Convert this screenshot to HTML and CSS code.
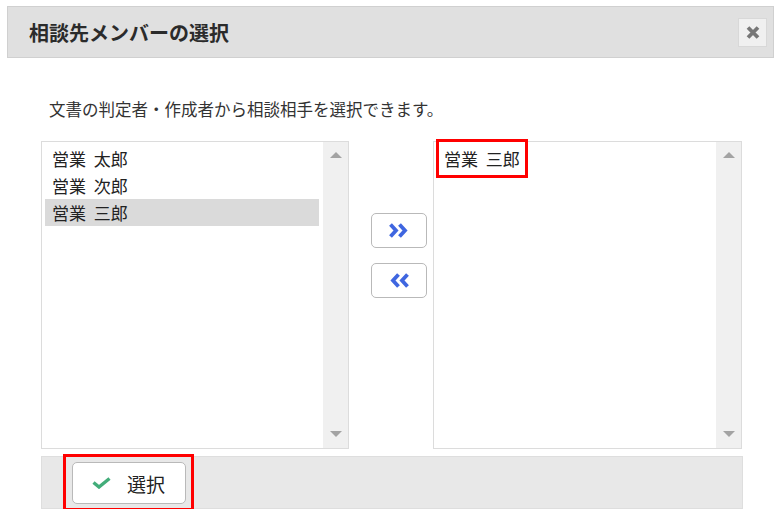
FILE: index.html
```html
<!DOCTYPE html>
<html lang="ja">
<head>
    <meta charset="UTF-8">
    <title>相談先メンバーの選択</title>
    <link rel="stylesheet" href="styles.css">
</head>
<body>

    <div class="dialog">
        <div class="dialog-header">
            <h2>相談先メンバーの選択</h2>
            <button class="close-btn" title="閉じる">
                <svg width="14" height="13" viewBox="0 0 14 13"><path d="M2 1.5 L12 11.5 M12 1.5 L2 11.5" stroke="#777" stroke-width="3.8"/></svg>
            </button>
        </div>

        <div class="dialog-body">
            <p class="note">文書の判定者・作成者から相談相手を選択できます。</p>

            <div class="picker">
                <div class="listbox">
                    <ul class="items">
                        <li>営業 太郎</li>
                        <li>営業 次郎</li>
                        <li class="selected">営業 三郎</li>
                    </ul>
                    <div class="scrollbar"><span class="arrow-up"></span><span class="arrow-down"></span></div>
                </div>

                <div class="move-buttons">
                    <button class="move-btn">
                        <svg width="22" height="15" viewBox="0 0 22 15"><path d="M2.5 1.5 L8 7.5 L2.5 13.5 M11.5 1.5 L17 7.5 L11.5 13.5" fill="none" stroke="#3f66e0" stroke-width="3.8"/></svg>
                    </button>
                    <button class="move-btn">
                        <svg width="22" height="15" viewBox="0 0 22 15"><path d="M19.5 1.5 L14 7.5 L19.5 13.5 M10.5 1.5 L5 7.5 L10.5 13.5" fill="none" stroke="#3f66e0" stroke-width="3.8"/></svg>
                    </button>
                </div>

                <div class="listbox">
                    <ul class="items items-right">
                        <li class="marked">営業 三郎</li>
                    </ul>
                    <div class="scrollbar"><span class="arrow-up"></span><span class="arrow-down"></span></div>
                </div>
            </div>

            <div class="dialog-footer">
                <div class="mark-box">
                    <button class="select-btn">
                        <svg width="19" height="12" viewBox="0 0 19 12"><path d="M1.5 5.5 L7 10 L17.5 1.5" fill="none" stroke="#43ad7a" stroke-width="3.4"/></svg>
                        <span>選択</span>
                    </button>
                </div>
            </div>
        </div>
    </div>

</body>
</html>
```

FILE: styles.css
```css
body {
    margin: 0;
    background-color: #fff;
    font-family: "Noto Sans CJK JP", "Noto Sans", sans-serif;
    color: #333;
}
.dialog {
    margin: 6px 6px 0 7px;
}
.dialog-header {
    height: 50px;
    background-color: #e0e0e0;
    border: 1px solid #d0d0d0;
    display: flex;
    align-items: center;
    justify-content: space-between;
    padding: 0 6px 0 21px;
}
.dialog-header h2 {
    margin: 0;
    font-size: 20px;
    font-weight: bold;
    color: #2b2b2b;
}
.close-btn {
    width: 29px;
    height: 29px;
    padding: 0;
    background-color: #f0f0f0;
    border: 1px solid #d8d8d8;
    display: flex;
    align-items: center;
    justify-content: center;
    cursor: pointer;
}
.dialog-body {
    padding: 0 31px 0 34px;
}
.note {
    margin: 40px 0 21px;
    padding-left: 8px;
    font-size: 16.5px;
    line-height: 22px;
    color: #333;
}
.picker {
    display: flex;
    height: 308px;
}
.listbox {
    width: 308px;
    border: 1px solid #dcdcdc;
    display: flex;
    box-sizing: border-box;
}
.listbox:last-child {
    width: 309px;
}
.items {
    list-style: none;
    margin: 0;
    padding: 3px 4px 0 3px;
    flex: 1;
}
.items li {
    font-size: 17px;
    line-height: 27px;
    height: 27px;
    padding-left: 7px;
    word-spacing: 4px;
    color: #222;
}
.items li.selected {
    background-color: #dadada;
}
.items-right {
    padding: 0 0 0 5px;
}
.items-right li.marked {
    display: inline-block;
    padding: 3px 5px;
    outline: 3px solid #f00;
}
.scrollbar {
    width: 25px;
    background-color: #f0f0f0;
    display: flex;
    flex-direction: column;
    justify-content: space-between;
    align-items: center;
    padding: 10px 0 11px;
}
.arrow-up {
    border-left: 6px solid transparent;
    border-right: 6px solid transparent;
    border-bottom: 6px solid #a3a3a3;
}
.arrow-down {
    border-left: 6px solid transparent;
    border-right: 6px solid transparent;
    border-top: 6px solid #a3a3a3;
}
.move-buttons {
    width: 84px;
    padding: 72px 0 0 22px;
    box-sizing: border-box;
    display: flex;
    flex-direction: column;
    gap: 15px;
}
.move-btn {
    width: 56px;
    height: 35px;
    padding: 0;
    background-color: #fff;
    border: 1px solid #b9b9b9;
    border-radius: 5px;
    display: flex;
    align-items: center;
    justify-content: center;
    cursor: pointer;
}
.dialog-footer {
    margin-top: 7px;
    height: 53px;
    box-sizing: border-box;
    background-color: #e8e8e8;
    border: 1px solid #dedede;
    padding: 0 0 0 21px;
}
.mark-box {
    width: 114px;
    border: 3px solid #f00;
    padding: 5px 5px 4px 6px;
    margin-top: -3px;
}
.select-btn {
    width: 114px;
    height: 42px;
    background-color: #fff;
    border: 1px solid #b9b9b9;
    border-radius: 5px;
    display: flex;
    align-items: center;
    padding: 0 0 0 19px;
    gap: 16px;
    font-family: "Noto Sans CJK JP", sans-serif;
    font-size: 19px;
    line-height: 1;
    color: #222;
    cursor: pointer;
}
```
